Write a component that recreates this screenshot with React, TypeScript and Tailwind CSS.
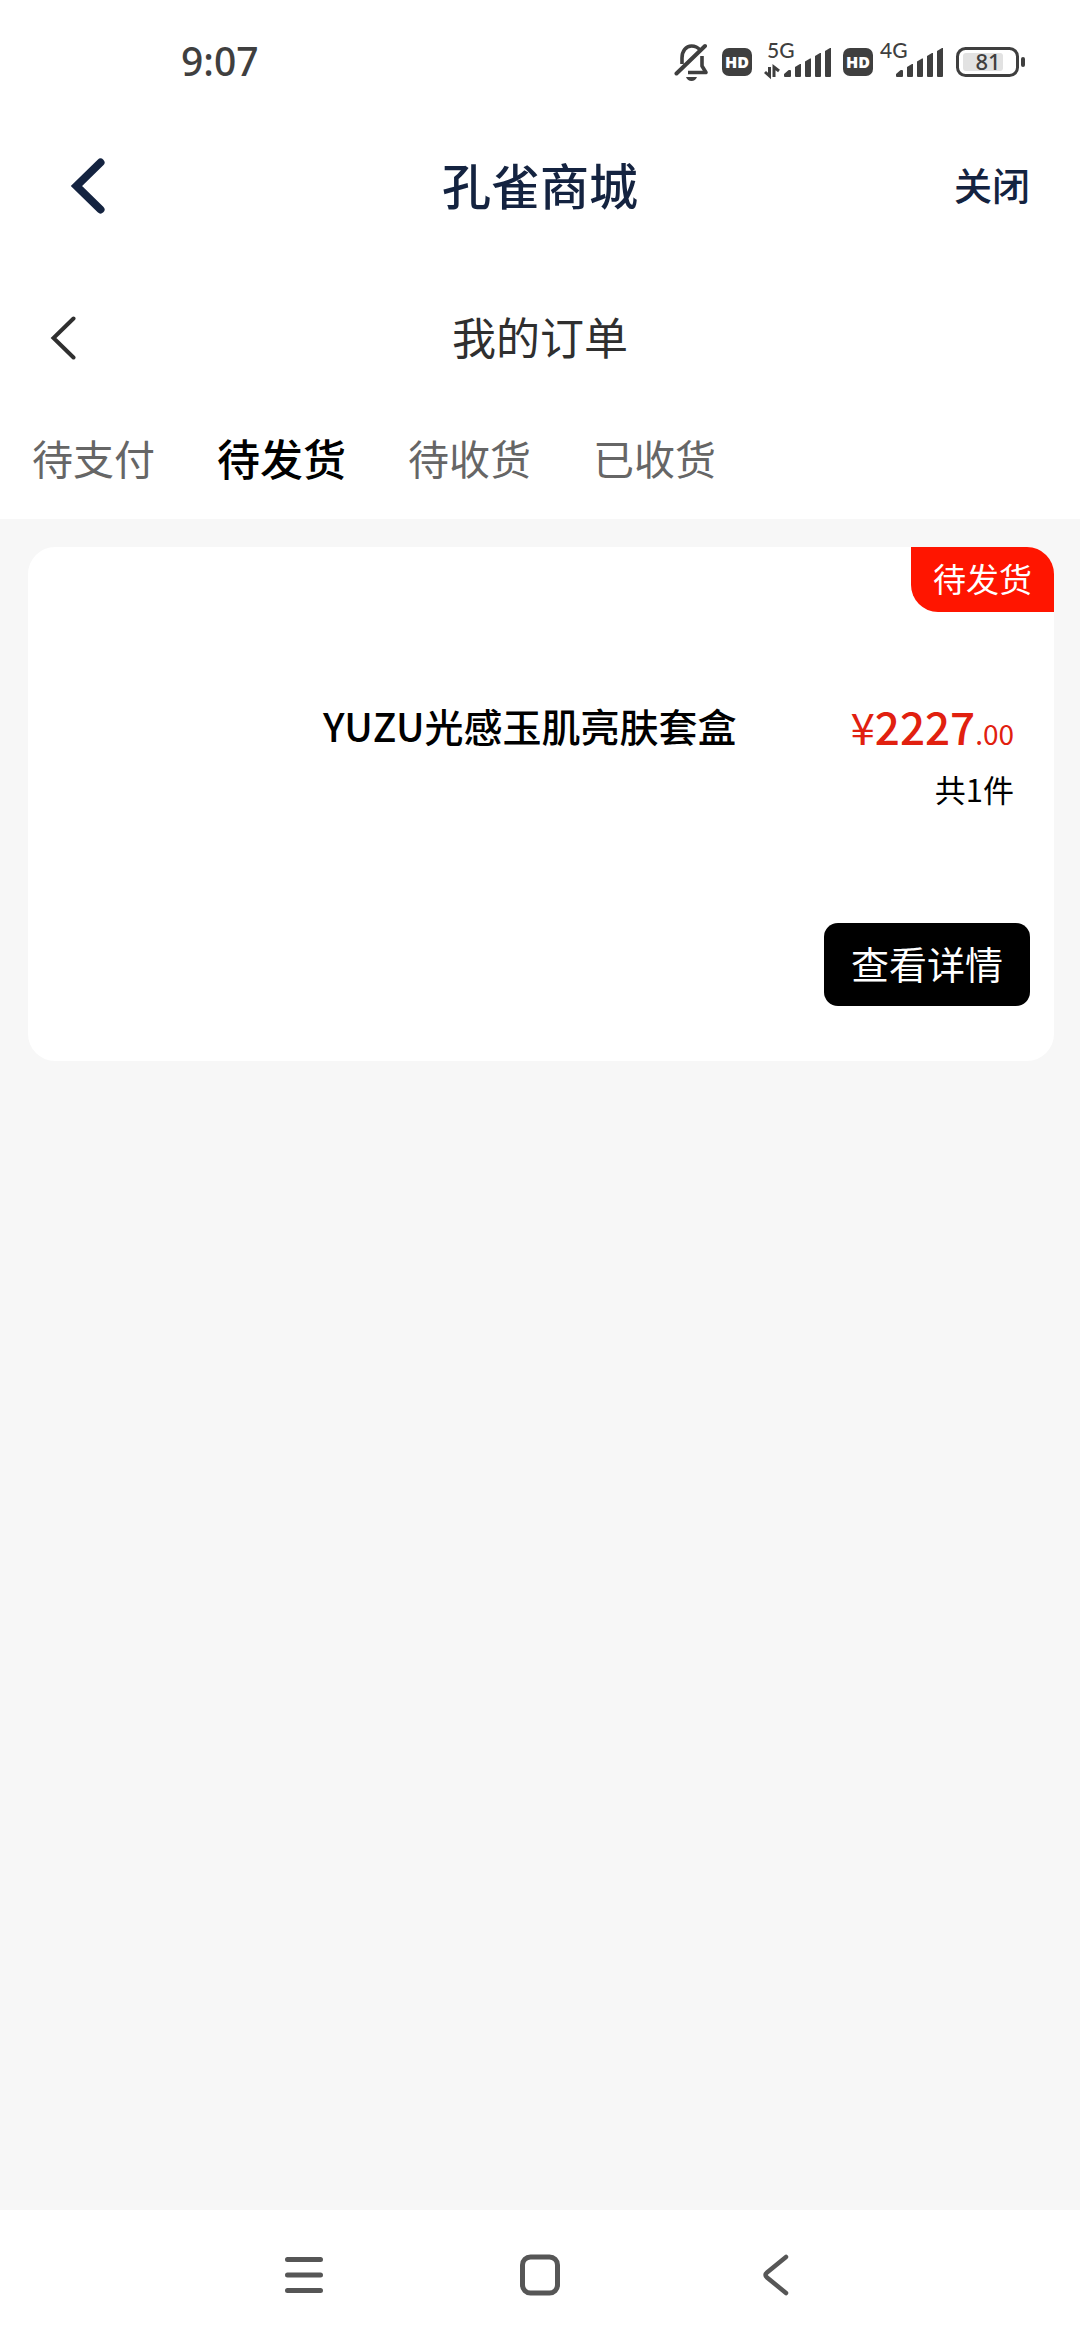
import React, { useState } from 'react';
import clsx from 'clsx';

const tabs = ['待支付', '待发货', '待收货', '已收货'];

interface Order {
  id: number;
  name: string;
  status: string;
  yuan: string;
  cents: string;
  count: number;
}

const orders: Order[] = [
  { id: 1, name: 'YUZU光感玉肌亮肤套盒', status: '待发货', yuan: '2227', cents: '.00', count: 1 },
];

const BellOffIcon = () => (
  <svg width="36" height="40" viewBox="0 0 36 40" fill="none" aria-hidden="true">
    <path
      d="M8 22V16C8 9 12 4 17.500 4C21 4 24 5.500 26 8M28 14V24L32 30.500H14"
      stroke="#3f3f3f"
      strokeWidth="3.600"
      strokeLinejoin="round"
    />
    <path d="M2.500 31.500L31 4" stroke="#3f3f3f" strokeWidth="4" strokeLinecap="round" />
    <path d="M12 35H23C22 37.800 20 39 17.500 39C15 39 13 37.800 12 35Z" fill="#3f3f3f" />
  </svg>
);

const HdIcon = () => (
  <svg width="30" height="40" viewBox="0 0 30 40" aria-hidden="true">
    <rect y="6" width="30" height="28" rx="7" fill="#3f3f3f" />
    <text x="15" y="26" textAnchor="middle" fontSize="16" fontWeight="800" fill="#fff" className="font-['Open_Sans',sans-serif]">
      HD
    </text>
  </svg>
);

const SignalBars = ({ x }: { x: number }) => (
  <g fill="#3f3f3f">
    <path d={`M${x + 1} 34V32.500L${x + 5} 29H${x + 6}V34Z`} stroke="#3f3f3f" strokeWidth="2" strokeLinejoin="round" />
    <path d={`M${x + 11} 34V25L${x + 16} 22H${x + 17}V34Q${x + 17} 35 ${x + 16} 35H${x + 12}Q${x + 11} 35 ${x + 11} 34Z`} />
    <path d={`M${x + 21} 34V19.500L${x + 26} 16.500H${x + 27}V34Q${x + 27} 35 ${x + 26} 35H${x + 22}Q${x + 21} 35 ${x + 21} 34Z`} />
    <path d={`M${x + 31} 34V14L${x + 36} 11H${x + 37}V34Q${x + 37} 35 ${x + 36} 35H${x + 32}Q${x + 31} 35 ${x + 31} 34Z`} />
    <path d={`M${x + 41} 34V9L${x + 46} 6H${x + 47}V34Q${x + 47} 35 ${x + 46} 35H${x + 42}Q${x + 41} 35 ${x + 41} 34Z`} />
  </g>
);

const BatteryIcon = () => (
  <svg width="69" height="40" viewBox="0 0 69 40" aria-hidden="true">
    <rect x="1.500" y="6.500" width="60" height="27" rx="8" fill="none" stroke="#3f3f3f" strokeWidth="3" />
    <rect x="7" y="11" width="40" height="18" rx="3" fill="#e2e2e2" />
    <rect x="65" y="15" width="4" height="10" rx="2" fill="#3f3f3f" />
    <text x="32" y="28" textAnchor="middle" fontSize="22" fontWeight="500" fill="#3f3f3f" className="font-['Noto_Sans',sans-serif]">
      81
    </text>
  </svg>
);

const StatusBar = () => (
  <div className="flex h-[124px] items-center justify-between pl-[181px] pr-[55px] text-[#3f3f3f]">
    <span className="pb-1 font-['Noto_Sans',sans-serif] text-[39px] font-medium leading-none">9:07</span>
    <div className="flex items-center">
      <BellOffIcon />
      <div className="ml-3 flex items-center gap-3">
        <HdIcon />
        <svg width="68" height="48" viewBox="0 -4 68 48" aria-hidden="true">
          <text x="3" y="16" fontSize="21" fontWeight="500" fill="#3f3f3f" className="font-['Lato',sans-serif]">
            5G
          </text>
          <path d="M5.500 25V34L1 30M10 35V25L15 29" fill="none" stroke="#3f3f3f" strokeWidth="3" />
          <SignalBars x={20} />
        </svg>
      </div>
      <div className="ml-[11px] flex items-center gap-1.5">
        <HdIcon />
        <svg width="65" height="48" viewBox="-2 -4 65 48" aria-hidden="true">
          <text x="-1" y="16" fontSize="21" fontWeight="500" fill="#3f3f3f" className="font-['Lato',sans-serif]">
            4G
          </text>
          <SignalBars x={15} />
        </svg>
      </div>
      <div className="ml-3">
        <BatteryIcon />
      </div>
    </div>
  </div>
);

const AppHeader = () => (
  <header className="grid h-[124px] grid-cols-[1fr_auto_1fr] items-center px-[50px] text-[#142340]">
    <button type="button" aria-label="返回" className="w-14 pl-5">
      <svg width="36" height="56" viewBox="0 0 36 56" fill="none" aria-hidden="true">
        <path d="M30.500 4.500L6.500 28L30.500 51.500" stroke="currentColor" strokeWidth="8" strokeLinecap="round" />
      </svg>
    </button>
    <h1 className="pb-1.5 text-[49px] font-medium leading-none">孔雀商城</h1>
    <button type="button" className="justify-self-end pb-1 text-[38px] font-medium leading-none">
      关闭
    </button>
  </header>
);

const PageHeader = () => (
  <div className="mt-7 grid h-[123px] grid-cols-[1fr_auto_1fr] items-center px-12 text-[#2f2f2f]">
    <button type="button" aria-label="返回上一页" className="w-8">
      <svg width="32" height="44" viewBox="0 0 32 44" fill="none" aria-hidden="true">
        <path d="M25.500 2.500L5.500 22L25.500 41.500" stroke="currentColor" strokeWidth="4" strokeLinecap="round" />
      </svg>
    </button>
    <h2 className="pb-1 text-[44px] leading-none">我的订单</h2>
  </div>
);

const OrderCard: React.FC<{ order: Order }> = ({ order }) => (
  <article className="flex flex-col rounded-[27px] bg-white pb-[55px]">
    <div className="h-[65px] self-end rounded-tr-[27px] rounded-bl-[27px] bg-[#ff1500] px-[22px] text-[33px] leading-[62px] text-white">
      {order.status}
    </div>
    <div className="flex min-h-[311px] items-start justify-between pl-[295px] pr-10 pt-[84px]">
      <h3 className="text-[39px] font-medium leading-[58px] text-black">{order.name}</h3>
      <div className="text-right">
        <p className="text-[44px] leading-[60px] text-[#e1200f]">
          ¥<span className="font-medium">{order.yuan}</span>
          <span className="text-[28px]">{order.cents}</span>
        </p>
        <p className="text-[31px] leading-[52px] text-black">共{order.count}件</p>
      </div>
    </div>
    <button
      type="button"
      className="mr-6 h-[83px] self-end rounded-[14px] bg-black px-[27px] pb-1 text-[38px] leading-none text-white"
    >
      查看详情
    </button>
  </article>
);

const NavBar = () => (
  <nav className="flex h-[130px] items-center justify-center gap-[196px] text-[#565656]">
    <button type="button" aria-label="最近任务">
      <svg width="40" height="42" viewBox="0 0 40 42" fill="none" aria-hidden="true">
        <path d="M3.500 5.500H36.500M3.500 21H36.500M3.500 36.500H36.500" stroke="currentColor" strokeWidth="5" strokeLinecap="round" />
      </svg>
    </button>
    <button type="button" aria-label="主屏幕">
      <svg width="40" height="42" viewBox="0 0 40 42" fill="none" aria-hidden="true">
        <rect x="2.500" y="3" width="35" height="36" rx="8" stroke="currentColor" strokeWidth="5" />
      </svg>
    </button>
    <button type="button" aria-label="系统返回">
      <svg width="40" height="42" viewBox="0 0 40 42" fill="none" aria-hidden="true">
        <path
          d="M30 3L11 18.500Q8 21 11 23.500L30 39"
          stroke="currentColor"
          strokeWidth="4.500"
          strokeLinecap="round"
        />
      </svg>
    </button>
  </nav>
);

export default function App() {
  const [active, setActive] = useState('待发货');

  return (
    <div className="flex min-h-screen flex-col bg-white font-['Noto_Sans_CJK_SC',sans-serif]">
      <StatusBar />
      <AppHeader />
      <PageHeader />

      {/* Order status tabs */}
      <div role="tablist" className="flex h-[120px] items-center gap-[62px] px-8 pb-1">
        {tabs.map((tab) => (
          <button
            key={tab}
            type="button"
            role="tab"
            aria-selected={tab === active}
            onClick={() => setActive(tab)}
            className={clsx(
              'leading-none',
              tab === active ? 'text-[43px] font-medium text-black' : 'text-[41px] text-[#666666]'
            )}
          >
            {tab}
          </button>
        ))}
      </div>

      <main className="flex-1 bg-[#f7f7f7] pb-7 pl-7 pr-[26px] pt-7">
        {orders.map((order) => (
          <OrderCard key={order.id} order={order} />
        ))}
      </main>

      <NavBar />
    </div>
  );
}
